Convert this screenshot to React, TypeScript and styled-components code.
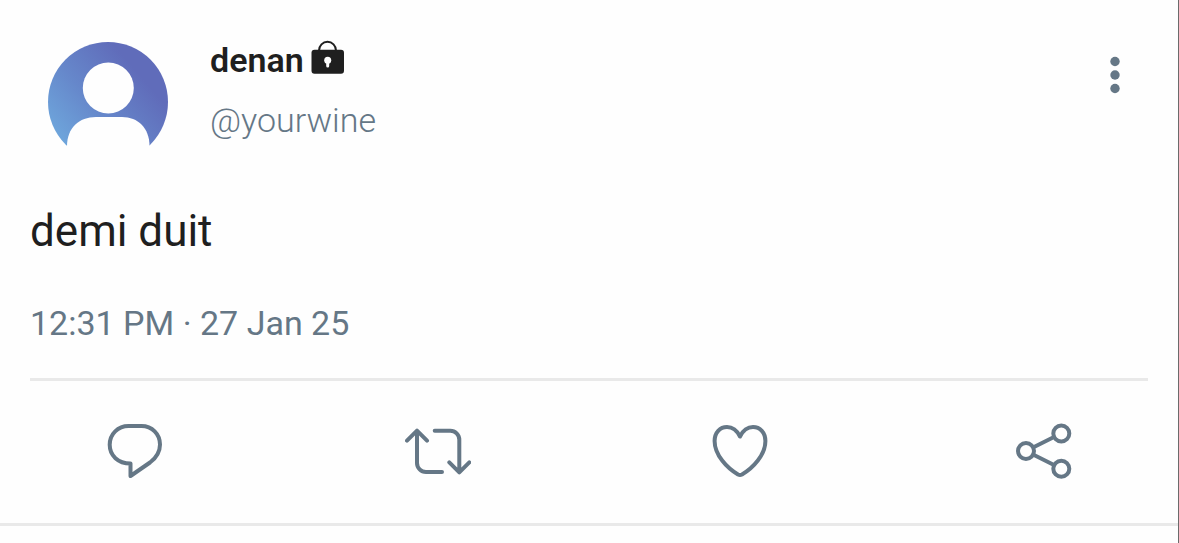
import React from "react";
import styled, { createGlobalStyle } from "styled-components";

const slate = "#657786";
const ink = "#1f1f1f";
const paper = "#fefefe";
const line = "#e9e9e9";

const GlobalStyle = createGlobalStyle`
  *, *::before, *::after { box-sizing: border-box; }
  body {
    margin: 0;
    background: ${paper};
    color: ${ink};
    font-family: Roboto, "Liberation Sans", sans-serif;
  }
`;

const Page = styled.main`
  min-height: 100vh;
  border-right: 1px solid #6b6b6b;
`;

const Tweet = styled.article`
  padding-top: 40px;
  border-bottom: 3px solid ${line};
`;

const Content = styled.div`
  margin: 0 30px;
  border-bottom: 3px solid ${line};
`;

const Header = styled.header`
  display: flex;
  align-items: flex-start;
  padding: 0 18px;
`;

const Avatar = styled.svg`
  flex: none;
  width: 120px;
  height: 120px;
  margin: 2px 42px 0 0;
`;

const Author = styled.div`
  flex: 1;
  display: grid;
  gap: 20px;
`;

const Name = styled.h1`
  display: flex;
  align-items: center;
  gap: 7px;
  margin: 0;
  font-size: 34px;
  font-weight: 600;
  line-height: 40px;
`;

const LockIcon = styled.svg`
  width: 34px;
  height: 40px;
`;

const Handle = styled.a`
  color: ${slate};
  font-size: 34px;
  font-weight: 300;
  line-height: 40px;
  text-decoration: none;
`;

const IconButton = styled.button<{ $width: number; $height: number }>`
  flex: none;
  width: ${(p) => p.$width}px;
  height: ${(p) => p.$height}px;
  padding: 0;
  border: 0;
  background: none;
  color: ${slate};
  cursor: pointer;

  svg {
    display: block;
    width: 100%;
    height: 100%;
  }
`;

const Message = styled.p`
  margin: 43px 0 0;
  font-size: 44px;
  line-height: 52px;
`;

const Time = styled.time`
  display: block;
  padding: 46px 0 35px;
  color: ${slate};
  font-size: 34px;
  line-height: 40px;
`;

const Actions = styled.div`
  display: flex;
  justify-content: space-between;
  padding: 37px 102px 39px;
`;

type ActionProps = { label: string; children: React.ReactNode };

const Action = ({ label, children }: ActionProps) => (
  <IconButton type="button" aria-label={label} $width={66} $height={66}>
    <svg
      viewBox="0 0 66 66"
      fill="none"
      stroke="currentColor"
      strokeWidth="4"
      strokeLinecap="round"
      strokeLinejoin="round"
    >
      {children}
    </svg>
  </IconButton>
);

export default function App() {
  return (
    <>
      <GlobalStyle />
      <Page>
        <Tweet>
          <Content>
            <Header>
              <Avatar viewBox="0 0 120 120" role="img" aria-label="Profile picture">
                <defs>
                  <linearGradient id="sky" x1="0" y1="0.8" x2="0.7" y2="0.2">
                    <stop offset="0" stopColor="#6faade" />
                    <stop offset="0.5" stopColor="#6688cb" />
                    <stop offset="1" stopColor="#606cba" />
                  </linearGradient>
                </defs>
                <circle cx="60" cy="60" r="60" fill="url(#sky)" />
                <circle cx="60.3" cy="46" r="25.5" fill={paper} />
                <path
                  d="M19 121V104C19 86 31 75 48 75H74C90 75 101.5 86 101.5 104V121Z"
                  fill={paper}
                />
              </Avatar>
              <Author>
                <Name>
                  denan
                  <LockIcon viewBox="0 0 34 40" role="img" aria-label="Protected account">
                    <path
                      d="M8 11V10.5a8.5 8.7 0 0 1 17 0V11"
                      fill="none"
                      stroke={ink}
                      strokeWidth="2"
                    />
                    <rect x="0.5" y="9.7" width="32.5" height="24" rx="3" fill={ink} />
                    <circle cx="16.7" cy="20.3" r="3.5" fill={paper} />
                    <path d="M15.2 22h3v4a1.5 1.5 0 0 1-3 0Z" fill={paper} />
                  </LockIcon>
                </Name>
                <Handle href="#yourwine">@yourwine</Handle>
              </Author>
              <IconButton type="button" aria-label="More options" $width={30} $height={70}>
                <svg viewBox="0 0 30 70" fill="currentColor">
                  <circle cx="15" cy="21.5" r="4.7" />
                  <circle cx="15" cy="35" r="4.7" />
                  <circle cx="15" cy="48.5" r="4.7" />
                </svg>
              </IconButton>
            </Header>
            <Message>demi duit</Message>
            <Time dateTime="2025-01-27T12:31">12:31 PM · 27 Jan 25</Time>
          </Content>
          <Actions>
            <Action label="Reply">
              <path d="M28.5 45.5C16 45.5 7.7 37.5 7.7 26.8C7.7 16 16 8 26.5 8H39.5C50 8 58 16 58 26.5C58 34 54 40 48 44.5L28.5 58Z" />
            </Action>
            <Action label="Repost">
              <path d="M2 22.7L12 12.7L22 22.7M12 13.5V45a9 9 0 0 0 9 9H37" />
              <path d="M29.7 12.7H45.3a9 9 0 0 1 9 9V53.5M44.3 44.3L54.3 54.3L64.3 44.3" />
            </Action>
            <Action label="Like">
              <path d="M33 18.5C30 12.5 25.5 9 20 9C13 9 7.6 14.5 7.6 23C7.6 37 20 50 31 56.5Q33 57.5 35 56.5C46 50 58.4 37 58.4 23C58.4 14.5 53 9 46 9C40.5 9 36 12.5 33 18.5Z" />
            </Action>
            <Action label="Share">
              <circle cx="16" cy="33" r="8" />
              <circle cx="51.3" cy="15.5" r="8" />
              <circle cx="51.3" cy="50.7" r="8" />
              <path d="M23.5 29.2L44 19M23.5 36.8L44 47" />
            </Action>
          </Actions>
        </Tweet>
      </Page>
    </>
  );
}
